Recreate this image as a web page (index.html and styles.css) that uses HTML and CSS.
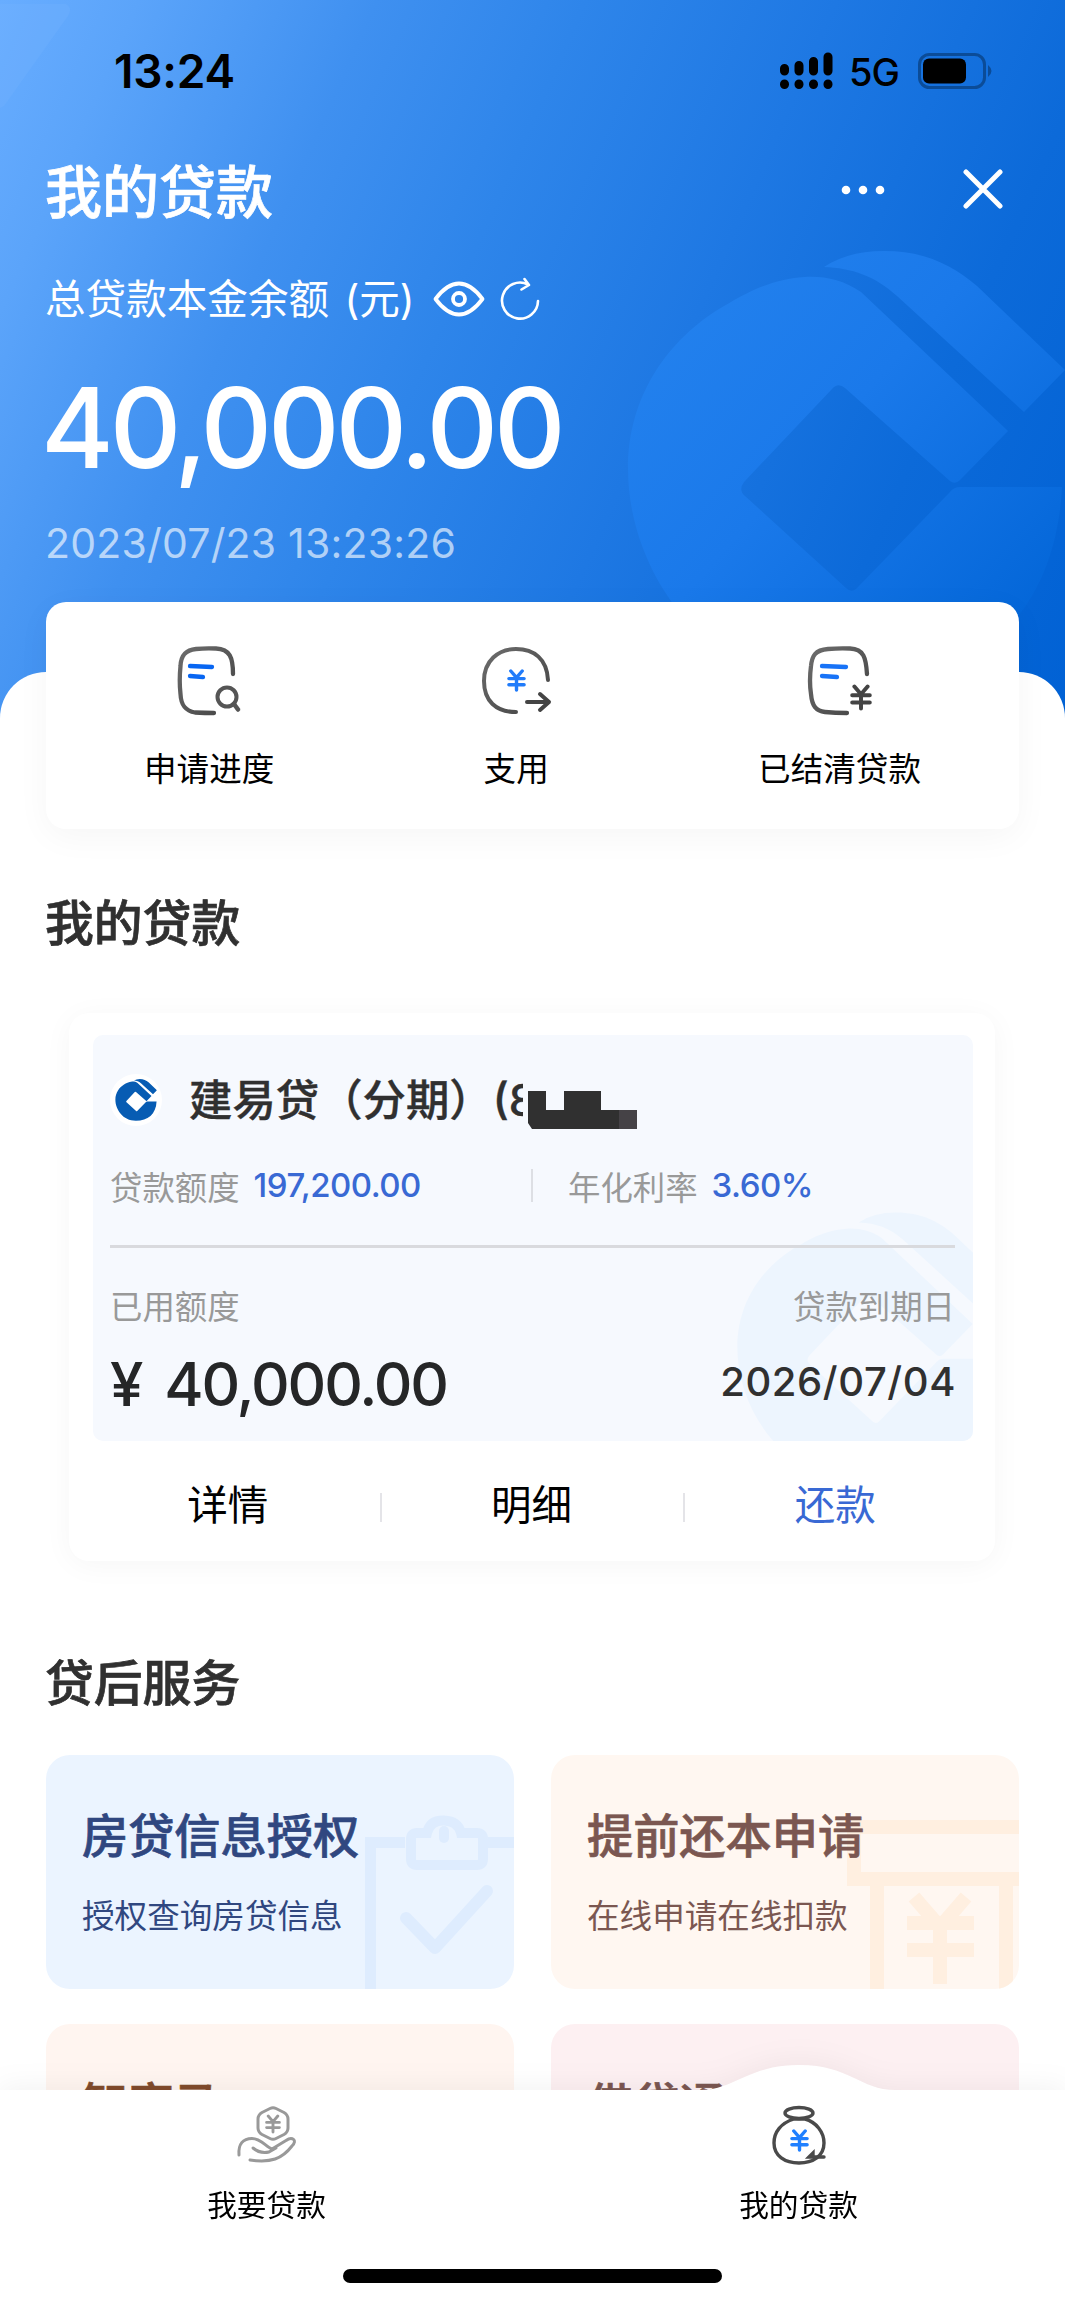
FILE: index.html
```html
<!DOCTYPE html>
<html lang="zh-CN">
<head>
<meta charset="utf-8">
<title>我的贷款</title>
<link rel="stylesheet" href="styles.css">
</head>
<body>
<svg class="defs" width="0" height="0" aria-hidden="true">
  <defs>
    <linearGradient id="ink" x1="0" y1="0" x2="1" y2="1"><stop offset="0" stop-color="#6c6c6c"/><stop offset="1" stop-color="#444"/></linearGradient>
    <linearGradient id="markFill" gradientUnits="userSpaceOnUse" x1="40" y1="80" x2="420" y2="420"><stop offset="0" stop-color="#2482ee"/><stop offset=".45" stop-color="#1a79ea"/><stop offset="1" stop-color="#0366d8"/></linearGradient>
    <symbol id="mark" viewBox="0 0 465 480">
      <path fill-rule="evenodd" d="M261 72C243 60 225 56 205 57C165 60 142 76 119 89C72 118 28 172 28 249C28 350 105 470 244 470C370 470 455 400 462 267H360Q354 267 350 272L258 367Q252 374 246 368L145 276Q138 270 144 262L232 169Q238 162 245 168L350 261Q355 265 360 260L408 211Z"/>
      <path d="M224 47Q248 31 284 31C325 31 352 45 377 66L465 150L424 192L297 76C275 56 252 48 224 47Z"/>
    </symbol>
    <symbol id="yuan" viewBox="0 0 20 24"><path d="M4 2L10 9L16 2M2 10H18M2 16.500H18M10 9V22" fill="none" stroke="currentColor" stroke-width="3.600" stroke-linecap="round"/></symbol>
  </defs>
</svg>
<div class="screen">
  <header class="hero">
    <svg class="hero-corner" width="72" height="110" viewBox="0 0 72 110"><path d="M0 4H66Q73 8 68 16L4 106L0 108Z" fill="#78b2ff" fill-opacity=".28"/></svg>
    <svg class="hero-mark" width="465" height="480"><use href="#mark" fill="url(#markFill)"/></svg>
    <div class="status">
      <span class="clock">13:24</span>
      <div class="status-right">
        <svg width="54" height="38" viewBox="0 0 54 38"><g stroke="#000" stroke-width="9" stroke-linecap="round"><path d="M4.500 16.500V19M19 13.500V19M33.500 9.500V19M48 5V19M4.500 32V32.500M19 32V32.500M33.500 32V32.500M48 32V32.500"/></g></svg>
        <span class="net">5G</span>
        <svg width="75" height="36" viewBox="0 0 75 36"><rect x="1.500" y="1.500" width="65" height="33" rx="10" fill="none" stroke="#0b4c98" stroke-width="3"/><rect x="5" y="5.500" width="43" height="25" rx="6"/><path d="M70 12Q77 18 70 24Z" fill="#0b4c98"/></svg>
      </div>
    </div>
    <div class="title-row">
      <h1>我的贷款</h1>
      <svg class="dots" width="44" height="12" viewBox="0 0 44 12" fill="#fff"><circle cx="5" cy="6" r="4.300"/><circle cx="22" cy="6" r="4.300"/><circle cx="39" cy="6" r="4.300"/></svg>
      <svg width="42" height="42" viewBox="0 0 42 42"><path d="M4 3L38 37M38 3L4 37" stroke="#fff" stroke-width="5" stroke-linecap="round"/></svg>
    </div>
    <div class="sub-row">
      <span>总贷款本金余额 (元)</span>
      <svg class="eye" width="52" height="36" viewBox="0 0 52 36" fill="none" stroke="#fff" stroke-width="3.800" stroke-linejoin="round"><path d="M2.500 18C10 8 17 2.500 26 2.500S42 8 49.500 18C42 28 35 33.500 26 33.500S10 28 2.500 18Z"/><circle cx="26" cy="18" r="6"/></svg>
      <svg class="reload" width="40" height="44" viewBox="0 0 40 44" fill="none" stroke="#fff" stroke-width="2.600" stroke-linecap="round" stroke-linejoin="round"><path d="M28 7.500A18 18 0 1 0 38 24M24.500 2L29 8L21.500 12.500"/></svg>
    </div>
    <div class="total">40,000.00</div>
    <div class="stamp">2023/07/23 13:23:26</div>
  </header>

  <main class="sheet">
    <nav class="quick">
      <a><svg width="74" height="74" viewBox="-5 0 74 74" fill="none" stroke-linecap="round"><path d="M56 30C56 14 53 5 39 4.500Q28 4 19 5C8 6 4 12 3.500 22Q2 37 3.500 50C4 62 9 67 18 68.500Q28 69 37 69" stroke="url(#ink)" stroke-width="4.300"/><path d="M13 22L35 23M13 32L26 33" stroke="#0866f2" stroke-width="4.300"/><circle cx="50" cy="53" r="9.500" stroke="#555" stroke-width="4"/><path d="M57 60L61 65.500" stroke="#555" stroke-width="4.500"/></svg><span>申请进度</span></a>
      <a><svg width="74" height="74" viewBox="0 0 74 74" fill="none" stroke-linecap="round"><path d="M69 36C68 15 55 5 37 5S5 17 5 37S17 68 37 68" stroke="url(#ink)" stroke-width="4"/><path d="M48 58H70M61 50L70 58L61 66" stroke="#444" stroke-width="4" stroke-linejoin="round"/><use href="#yuan" x="28" y="25" width="19" height="23" color="#207bfa"/></svg><span>支用</span></a>
      <a><svg width="74" height="74" viewBox="2 0 74 74" fill="none" stroke-linecap="round"><path d="M66 30C65 14 63 5 49 4.500Q38 4 27 5C14 6 11 12 10 22Q8 37 10 50C11 62 15 67 24 68Q34 69 46 69" stroke="url(#ink)" stroke-width="4.300"/><path d="M21 22L45 23M21 32L36 33" stroke="#1873f7" stroke-width="4.300"/><use href="#yuan" x="49" y="40" width="22" height="27" color="#444"/></svg><span>已结清贷款</span></a>
    </nav>

    <h2>我的贷款</h2>
    <section class="loan">
      <div class="loan-body">
        <svg class="loan-mark" width="288" height="298"><use href="#mark" fill="#edf5fe"/></svg>
        <div class="loan-name">
          <span class="logo"><svg width="42" height="46" viewBox="24 27 442 450"><use href="#mark" x="0" y="0" width="465" height="480" fill="#075cb3"/></svg></span>
          <strong>建易贷（分期）(8</strong>
          <svg class="mask" width="109" height="38" viewBox="0 0 109 38"><path class="mask-base" d="M-5 -16H20V34H-5Z"/><path d="M0 0H18V19H36V0H73V19H91V38H4L0 32Z" fill="#303030"/><path d="M91 19H109V38H91Z" fill="#454246"/></svg>
        </div>
        <div class="terms">
          <div class="term first"><span>贷款额度</span><b>197,200.00</b></div>
          <div class="term"><span>年化利率</span><b>3.60%</b></div>
        </div>
        <div class="figures">
          <div><span class="label">已用额度</span><strong class="used">¥ 40,000.00</strong></div>
          <div class="due"><span class="label">贷款到期日</span><strong>2026/07/04</strong></div>
        </div>
      </div>
      <div class="actions"><a>详情</a><a>明细</a><a class="repay">还款</a></div>
    </section>

    <h2 class="after">贷后服务</h2>
    <section class="services">
      <article class="svc blue">
        <svg class="svc-art" width="150" height="174" viewBox="0 0 150 174" fill="none" stroke="#deecfe"><path d="M6.500 174V27.500H41M124 27.500H150" stroke-width="11"/><path d="M47 24Q47 18 53 18H63Q66 5 80 5.500T97 18H113Q119 18 119 24V44Q119 50 113 50H53Q47 50 47 44Z" stroke-width="10"/><path d="M80 16V23" stroke-width="10" stroke-linecap="round"/><path d="M42 103L71 133L123 76" stroke-width="12" stroke-linecap="round" stroke-linejoin="round"/></svg>
        <h3>房贷信息授权</h3><p>授权查询房贷信息</p>
      </article>
      <article class="svc cream">
        <svg class="svc-art" width="172" height="172" viewBox="0 0 172 172" fill="none" stroke="#ffefe0" stroke-width="14"><path d="M7 62V10H172M0 62H172M30 68V172M159 68V172M67 80L93 110L119 80M60 106H127M60 133H127M93 106V167"/></svg>
        <h3>提前还本申请</h3><p>在线申请在线扣款</p>
      </article>
      <article class="svc peach"><h3>智家马</h3></article>
      <article class="svc pink"><h3>借贷通</h3></article>
    </section>
  </main>

  <footer class="tabbar">
    <svg class="tab-bg" width="1065" height="240" viewBox="0 0 1065 240"><path d="M0 25H700C735 25 748 0 799 0S860 25 895 25H1065V240H0Z" fill="#fff"/></svg>
    <a><svg width="64" height="64" viewBox="0 0 64 64" fill="none" stroke="#999" stroke-width="3" stroke-linecap="round" stroke-linejoin="round"><path d="M35 5.500Q38 4 41 5.500L49 9.500Q53 12 53 16V25Q53 29 49 31.500L41 35.500Q38 37 35 35.500L27 31.500Q23 29 23 25V16Q23 12 27 9.500ZM4 52C3 41 8 35.500 17 35.500C26 35.500 31 44 37 46L51 37.500C57 33 63 37 57 43C47 56 36 60 15 57M18 45Q25 51 34 49L41 45"/><use href="#yuan" x="30" y="11" width="16" height="20" color="#999"/></svg><span>我要贷款</span></a>
    <a><svg width="64" height="64" viewBox="0 0 64 64" fill="none" stroke="#4a4a4a" stroke-width="3.400" stroke-linecap="round"><ellipse cx="32" cy="10" rx="14" ry="5.500"/><path d="M27 16C14 20 7 29 7 40C7 53 18 60 32 60S57 53 57 40C57 29 49 19 38 16Z"/><path d="M42 54H57M42 54L46 50V54Z"/><use href="#yuan" x="23" y="26" width="19" height="23" color="#2080ff"/></svg><span>我的贷款</span></a>
    <div class="home"></div>
  </footer>
</div>
</body>
</html>
```
FILE: styles.css
```css
* { box-sizing: border-box; }
body { margin: 0; background: #fff; font-family: Inter, "Noto Sans CJK SC", sans-serif; color: #000; }
h1, h2, h3, p { margin: 0; }
h1, h2, h3 { -webkit-text-stroke: 0.7px currentColor; }
svg { display: block; flex: none; }
.defs { position: absolute; }
.screen { position: relative; width: 1065px; height: 2305px; overflow: hidden; }

.hero {
  position: relative;
  height: 740px;
  padding: 0 46px 0 45px;
  color: #fff;
  background: linear-gradient(114deg, #68adff 0%, #5ba4fa 10%, #3f90f0 27%, #2e85ea 42%, #1e78e3 60%, #0c6ad9 80%, #0061d4 100%);
}
.hero-mark { position: absolute; left: 600px; top: 220px; }
.hero-corner { position: absolute; left: 0; top: 0; }
.status { position: relative; height: 142px; padding: 0 26px 0 69px; display: flex; align-items: center; justify-content: space-between; color: #000; }
.clock { font-size: 46px; font-weight: 600; letter-spacing: -0.2px; }
.status-right { display: flex; align-items: center; }
.net { margin: 2px 19px 0 15px; font-size: 38px; font-weight: 500; letter-spacing: -1px; }
.title-row { position: relative; height: 96px; padding-right: 15px; display: flex; align-items: center; }
h1 { flex: 1; padding-top: 6px; font-size: 57px; line-height: 96px; font-weight: 500; }
.dots { margin-right: 77px; }
.sub-row { position: relative; height: 122px; display: flex; align-items: center; font-size: 40.6px; word-spacing: 4px; }
.sub-row span { margin-bottom: 6px; }
.eye { margin-left: 18px; }
.reload { margin-left: 15px; }
.total { position: relative; left: -4px; height: 136px; line-height: 136px; font-size: 111px; font-weight: 500; letter-spacing: -4.200px; }
.stamp { position: relative; height: 94px; line-height: 94px; font-size: 41px; letter-spacing: .2px; color: rgba(255,255,255,.63); }

.sheet { position: relative; margin-top: -68px; height: 1640px; padding: 0 46px; background: #fff; border-radius: 46px 46px 0 0; }
.quick {
  position: relative;
  top: -70px;
  height: 227px;
  padding: 0 98px;
  display: flex;
  justify-content: space-between;
  background: #fff;
  border-radius: 20px;
  box-shadow: 0 8px 34px rgba(0,0,0,.04);
}
.quick a { padding-top: 42px; display: flex; flex-direction: column; align-items: center; }
.quick span { margin-top: 29px; font-size: 32.600px; line-height: 44px; }
h2 { margin: -11px 0 0 -1px; font-size: 48.800px; line-height: 72px; font-weight: 500; color: #303030; }

.loan { margin: 53px 24px 0 23px; height: 548px; padding: 22px 22px 0 24px; border-radius: 20px; background: #fff; box-shadow: 0 4px 30px rgba(0,0,0,.04); }
.loan-body { position: relative; height: 406px; padding: 0 18px 0 17px; border-radius: 10px; overflow: hidden; background: #f6f9fe; }
.loan-mark { position: absolute; right: -35px; bottom: -50px; }
.loan-name { position: relative; height: 130px; display: flex; align-items: center; }
.logo { width: 52px; height: 52px; border-radius: 50%; background: #fff; display: flex; align-items: center; justify-content: center; }
.loan-name strong { width: 339px; margin: 0 0 6px 27px; white-space: nowrap; font-size: 43.4px; font-weight: 500; color: #303030; -webkit-text-stroke: 0.4px currentColor; }
.mask { position: relative; margin-top: 20px; overflow: visible; }
.mask-base { fill: #f6f9fe; }
.terms { position: relative; height: 83px; display: flex; align-items: flex-start; border-bottom: 3px solid #d9dade; }
.term { height: 40px; display: flex; align-items: center; gap: 14px; font-size: 32.4px; color: #999; }
.term b { font-weight: 500; font-size: 33px; letter-spacing: -.5px; color: #3969d4; }
.term.first { width: 423px; margin-right: 35px; }
.term.first::after { content: ""; width: 2px; height: 33px; margin-left: auto; background: #dddfe4; }
.figures { position: relative; display: flex; justify-content: space-between; padding-top: 39px; }
.figures > div { display: flex; flex-direction: column; }
.label { font-size: 32.4px; line-height: 42px; color: #999; }
.used { line-height: 70px; margin-top: 20px; font-size: 60px; font-weight: 550; color: #252627; letter-spacing: -2.100px; word-spacing: 9px; }
.due { align-items: flex-end; }
.due strong { line-height: 70px; margin-top: 18px; font-size: 40px; font-weight: 500; letter-spacing: .6px; margin-right: -1px; color: #303030; }
.actions { display: flex; height: 120px; margin: 0 -14px 0 -17px; align-items: center; }
.actions a { flex: 1; height: 60px; line-height: 60px; display: flex; justify-content: center; align-items: center; position: relative; font-size: 40.5px; margin-top: 10px; }
.actions a + a::before { content: ""; position: absolute; left: 0; top: 17px; width: 2px; height: 29px; background: #e4e4e8; }
.actions .repay { color: #3969d4; }

.after { margin-top: 87px; }
.services { margin-top: 35px; display: grid; grid-template-columns: 1fr 1fr; grid-auto-rows: 234px; gap: 35px 37px; }
.svc { position: relative; overflow: hidden; border-radius: 24px; padding: 48px 36px; }
.svc h3 { position: relative; font-size: 46.200px; line-height: 66px; font-weight: 500; }
.svc p { position: relative; margin-top: 24px; font-size: 32.600px; line-height: 46px; }
.svc-art { position: absolute; right: 0; bottom: 0; }
.blue { background: #ebf4ff; color: #304780; }
.cream { background: #fff7f1; color: #7b5751; }
.peach { background: #fff5f0; color: #814b2c; }
.pink { background: #fdf0f2; color: #7b5751; }

.tabbar { position: absolute; left: 0; right: 0; bottom: 0; height: 240px; display: flex; justify-content: center; filter: drop-shadow(0 -3px 14px rgba(0,0,0,.05)); }
.tab-bg { position: absolute; left: 0; top: 0; }
.tabbar a { position: relative; width: 532px; padding-top: 38px; display: flex; flex-direction: column; align-items: center; font-size: 29.700px; line-height: 40px; }
.tabbar span { margin-top: 18px; }
.home { position: absolute; bottom: 22px; left: 343px; width: 379px; height: 14px; border-radius: 7px; background: #000; }
```
